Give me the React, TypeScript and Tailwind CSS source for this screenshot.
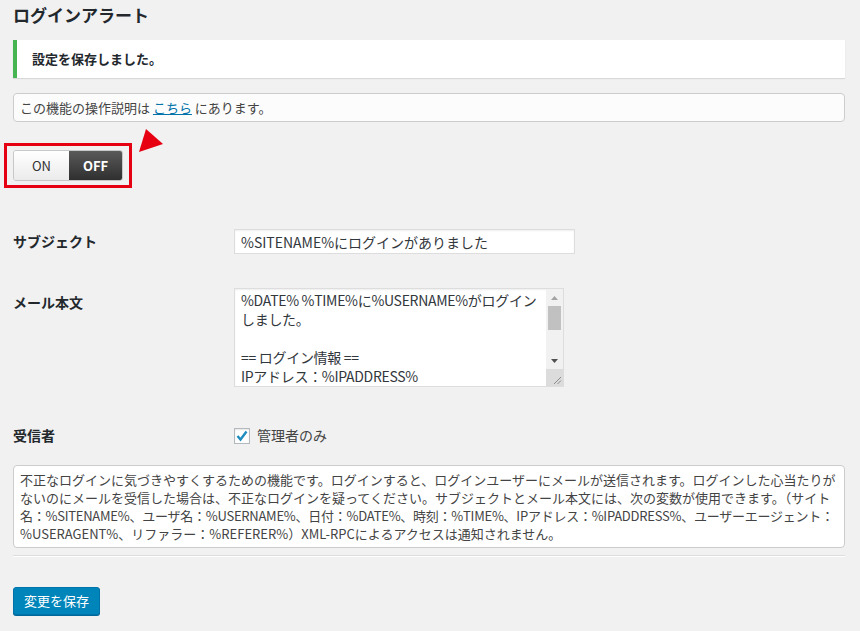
export default function App() {
  return (
    <div className="relative min-h-screen bg-[#f1f1f1] pl-[13px] pr-[15px] pt-[4px] text-[13px] text-[#444] font-['Noto_Sans_CJK_JP',sans-serif]">
      <h2 className="text-[17px] leading-[22px] font-bold text-[#23282d]">ログインアラート</h2>

      {/* saved notice */}
      <div className="mt-[14px] flex h-[38px] items-center border-l-4 border-[#46b450] bg-white pl-[15px] font-bold text-[#23282d] shadow-[0_1px_1px_rgba(0,0,0,0.1)]">
        設定を保存しました。
      </div>

      <div className="mt-[15px] flex h-[29px] items-center rounded-[4px] border border-[#ccc] bg-[#fcfcfc] pl-[6px]">
        この機能の操作説明は&nbsp;
        <a className="text-[#0073aa] underline">こちら</a>
        &nbsp;にあります。
      </div>

      {/* on/off switch, highlighted */}
      <div className="relative -ml-[9px] mt-[21px] w-[128px] border-[3px] border-[#e50012] px-[6px] py-[4px]">
        <div className="flex h-[31px] w-[110px] overflow-hidden rounded-[3px] border border-[#c8c8c8] text-[13px]">
          <div className="flex w-[55px] items-center justify-center bg-[linear-gradient(to_bottom,#ffffff,#ebebeb)] text-[#333]">
            ON
          </div>
          <div className="flex flex-1 items-center justify-center bg-[linear-gradient(to_bottom,#5a5a5a,#2f2f2f)] font-bold text-white">
            OFF
          </div>
        </div>
        <svg className="absolute left-[132px] top-[-17px]" width="25" height="24" viewBox="0 0 25 24">
          <polygon points="7,0 24,15 0,23" fill="#e60012" />
        </svg>
      </div>

      {/* form table */}
      <div className="mt-[41px] flex items-start">
        <div className="w-[221px] pt-[2px] text-[14px] leading-[21px] font-bold text-[#23282d]">サブジェクト</div>
        <input
          readOnly
          defaultValue="%SITENAME%にログインがありました"
          className="h-[25px] w-[341px] border border-[#ddd] bg-white px-[6px] text-[14px] text-[#32373c] shadow-[inset_0_1px_2px_rgba(0,0,0,0.07)] outline-none"
        />
      </div>

      <div className="mt-[34px] flex items-start">
        <div className="w-[221px] pt-[4px] text-[14px] leading-[21px] font-bold text-[#23282d]">メール本文</div>
        <div className="flex h-[99px] w-[330px] border border-[#ddd] bg-white shadow-[inset_0_1px_2px_rgba(0,0,0,0.07)]">
          <div className="flex-1 overflow-hidden whitespace-pre px-[6px] pt-[2px] text-[14px] leading-[19px] tracking-[-0.3px] text-[#32373c]">
            {"%DATE% %TIME%に%USERNAME%がログイン\nしました。\n\n== ログイン情報 ==\nIPアドレス：%IPADDRESS%"}
          </div>
          <div className="flex w-[17px] flex-col bg-[#f1f1f1]">
            <div className="flex h-[17px] items-center justify-center">
              <svg width="7" height="4" viewBox="0 0 7 4">
                <polygon points="3.5,0 7,4 0,4" fill="#a3a3a3" />
              </svg>
            </div>
            <div className="mx-[2px] h-[24px] bg-[#c1c1c1]" />
            <div className="flex-1" />
            <div className="flex h-[17px] items-center justify-center">
              <svg width="7" height="4" viewBox="0 0 7 4">
                <polygon points="0,0 7,0 3.5,4" fill="#505050" />
              </svg>
            </div>
            <div className="h-[17px] bg-[#dcdcdc]">
              <svg width="17" height="17" viewBox="0 0 17 17">
                <line x1="15" y1="8" x2="8" y2="15" stroke="#8a8a8a" strokeWidth="1" />
                <line x1="15" y1="11.5" x2="11.5" y2="15" stroke="#8a8a8a" strokeWidth="1" />
              </svg>
            </div>
          </div>
        </div>
      </div>

      <div className="mt-[38px] flex h-[21px] items-center">
        <div className="w-[221px] text-[14px] leading-[21px] font-bold text-[#23282d]">受信者</div>
        <div className="flex h-[16px] w-[16px] items-center justify-center border border-[#b4b9be] bg-white shadow-[inset_0_1px_2px_rgba(0,0,0,0.1)]">
          <svg width="14" height="14" viewBox="0 0 14 14">
            <polyline points="2.5,7 5.5,10.5 11.5,2.5" fill="none" stroke="#1e8cbe" strokeWidth="2.4" />
          </svg>
        </div>
        <span className="ml-[7px] text-[14px] text-[#444]">管理者のみ</span>
      </div>

      {/* description */}
      <div className="mt-[19px] rounded-[4px] border border-[#ccc] bg-white px-[6px] pb-[4px] pt-[5px] leading-[18px] whitespace-nowrap">
        <div>不正なログインに気づきやすくするための機能です。ログインすると、ログインユーザーにメールが送信されます。ログインした心当たりが</div>
        <div>ないのにメールを受信した場合は、不正なログインを疑ってください。サブジェクトとメール本文には、次の変数が使用できます。（サイト</div>
        <div className="tracking-[-0.25px]">名：%SITENAME%、ユーザ名：%USERNAME%、日付：%DATE%、時刻：%TIME%、IPアドレス：%IPADDRESS%、ユーザーエージェント：</div>
        <div>%USERAGENT%、リファラー：%REFERER%）XML-RPCによるアクセスは通知されません。</div>
      </div>

      <div className="mt-[7px] border-t border-b border-t-[#ddd] border-b-white" />

      <button className="mt-[30px] h-[28px] rounded-[3px] border border-[#0073aa] bg-[#0085ba] px-[10px] text-[13px] text-white shadow-[0_1px_0_#006799]">
        変更を保存
      </button>
    </div>
  );
}
